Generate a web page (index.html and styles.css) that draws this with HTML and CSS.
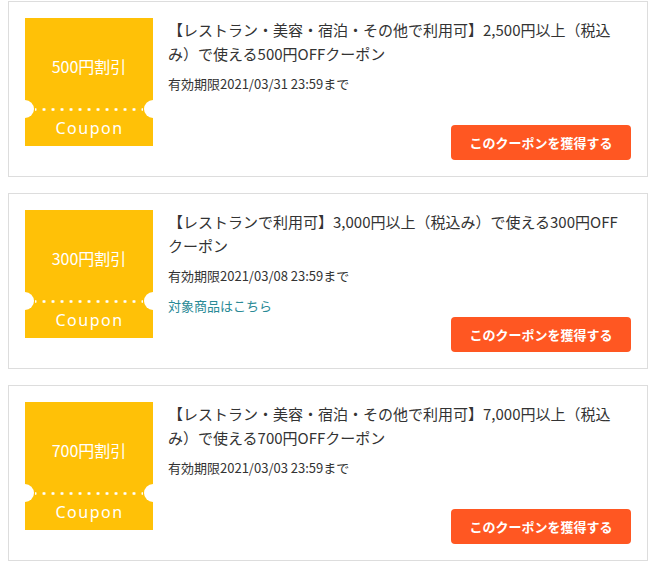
FILE: index.html
```html
<!DOCTYPE html>
<html lang="ja">
<head>
<meta charset="utf-8">
<title>Coupons</title>
<link rel="stylesheet" href="styles.css">
</head>
<body>
<div class="list">
  <div class="card">
    <div class="coupon">
      <div class="coupon-top">500円割引</div>
      <div class="coupon-line"></div>
      <div class="coupon-bottom">Coupon</div>
    </div>
    <div class="info">
      <p class="title">【レストラン・美容・宿泊・その他で利用可】2,500円以上（税込み）で使える500円OFFクーポン</p>
      <p class="date">有効期限2021/03/31 23:59まで</p>
      <button class="btn">このクーポンを獲得する</button>
    </div>
  </div>
  <div class="card">
    <div class="coupon">
      <div class="coupon-top">300円割引</div>
      <div class="coupon-line"></div>
      <div class="coupon-bottom">Coupon</div>
    </div>
    <div class="info">
      <p class="title">【レストランで利用可】3,000円以上（税込み）で使える300円OFFクーポン</p>
      <p class="date">有効期限2021/03/08 23:59まで</p>
      <a class="link" href="#">対象商品はこちら</a>
      <button class="btn">このクーポンを獲得する</button>
    </div>
  </div>
  <div class="card">
    <div class="coupon">
      <div class="coupon-top">700円割引</div>
      <div class="coupon-line"></div>
      <div class="coupon-bottom">Coupon</div>
    </div>
    <div class="info">
      <p class="title">【レストラン・美容・宿泊・その他で利用可】7,000円以上（税込み）で使える700円OFFクーポン</p>
      <p class="date">有効期限2021/03/03 23:59まで</p>
      <button class="btn">このクーポンを獲得する</button>
    </div>
  </div>
</div>
</body>
</html>
```
FILE: styles.css
```css
* { box-sizing: border-box; }
html, body { margin: 0; background: #fff; }
body {
  padding: 1px 8px 0;
  font-family: "Noto Sans CJK JP", "Noto Sans", sans-serif;
  color: #333;
}
.list {
  display: flex;
  flex-direction: column;
  gap: 16px;
}
.card {
  display: flex;
  gap: 15px;
  border: 1px solid #ddd;
  padding: 16px;
  background: #fff;
}
.coupon {
  position: relative;
  flex: 0 0 128px;
  width: 128px;
  height: 128px;
  background: #ffc107;
  color: #fff;
  display: flex;
  flex-direction: column;
}
.coupon::before,
.coupon::after {
  content: "";
  position: absolute;
  top: 82px;
  width: 18px;
  height: 18px;
  border-radius: 50%;
  background: #fff;
}
.coupon::before { left: -9px; }
.coupon::after { right: -9px; }
.coupon-top {
  height: 90px;
  display: flex;
  align-items: center;
  justify-content: center;
  padding-top: 6px;
  font-size: 16px;
}
.coupon-line {
  height: 3px;
  margin: 0 10px;
  background-image: radial-gradient(circle, #fff 1.2px, rgba(255,255,255,0) 1.7px);
  background-size: 9px 3px;
  background-position: center;
}
.coupon-bottom {
  flex: 1;
  display: flex;
  align-items: center;
  justify-content: center;
  font-family: "Noto Sans", sans-serif;
  font-size: 16px;
  letter-spacing: 1.5px;
  padding-left: 1px;
  padding-bottom: 1px;
}
.info {
  flex: 1;
  min-height: 142px;
  display: flex;
  flex-direction: column;
  align-items: flex-start;
}
.title {
  margin: 0;
  font-size: 15px;
  line-height: 24px;
}
.date {
  margin: 8px 0 0;
  font-size: 13px;
  line-height: 20px;
}
.link {
  margin-top: 10px;
  font-size: 13px;
  line-height: 20px;
  color: #2a8a96;
  text-decoration: none;
}
.btn {
  margin-top: auto;
  align-self: flex-end;
  width: 180px;
  height: 35px;
  border: none;
  border-radius: 4px;
  background: #ff5722;
  color: #fff;
  font-family: "Noto Sans CJK JP", sans-serif;
  font-weight: 700;
  font-size: 13px;
  cursor: pointer;
}
```
